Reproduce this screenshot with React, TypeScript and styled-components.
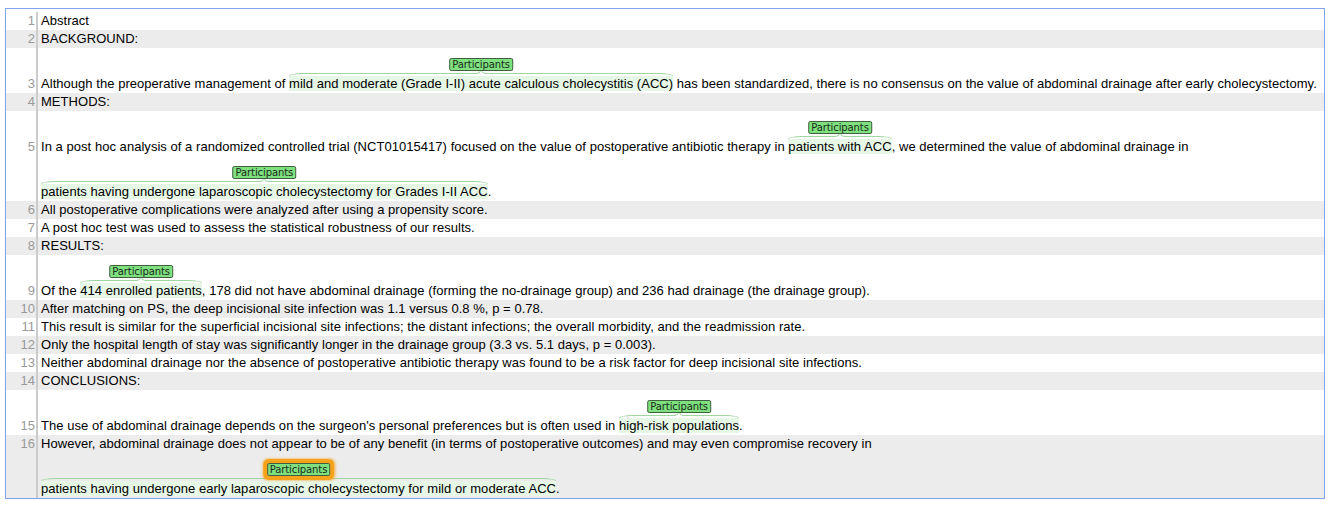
import React from "react";
import styled, { createGlobalStyle, css } from "styled-components";

const GlobalStyle = createGlobalStyle`
  *, *::before, *::after {
    box-sizing: border-box;
  }
  body {
    margin: 0;
    background: #ffffff;
    font-family: "Liberation Sans", Arial, sans-serif;
  }
`;

const Frame = styled.div`
  margin: 8px 0 0 5px;
  width: 1320px;
  border: 1px solid #7fa3ee;
  padding: 3px 0 0;
  background: #ffffff;
`;

const Row = styled.div<{ $shaded: boolean }>`
  display: flex;
  background: ${(p) => (p.$shaded ? "#ececec" : "transparent")};
`;

const Gutter = styled.div<{ $offset: boolean }>`
  flex: 0 0 32px;
  border-right: 2px solid #cccccc;
  padding: ${(p) => (p.$offset ? "27px" : "0")} 1px 0 0;
  text-align: right;
  font-size: 13px;
  line-height: 18px;
  color: #999999;
`;

const Lines = styled.div`
  flex: 1;
  padding-left: 3px;
`;

const Line = styled.div<{ $annotated: boolean }>`
  padding-top: ${(p) => (p.$annotated ? "27px" : "0")};
  font-size: 13px;
  line-height: 18px;
  letter-spacing: 0.04px;
  color: #000000;
  white-space: pre;
`;

const Span = styled.span`
  position: relative;
  background: #e6f7e6;
`;

const Brace = styled.span`
  position: absolute;
  left: 0;
  right: 0;
  bottom: 100%;
  height: 3px;
  display: flex;
`;

const BraceHalf = styled.span<{ $side: "left" | "right" }>`
  position: relative;
  flex: 1;
  border-top: 1px solid #9fd59f;
  ${(p) =>
    p.$side === "left"
      ? css`
          border-left: 1px solid #9fd59f;
          border-top-left-radius: 14px 3px;
          margin-right: 5px;
          &::after {
            right: -5px;
            border-right: 1px solid #9fd59f;
            border-bottom-right-radius: 5px 4px;
          }
        `
      : css`
          border-right: 1px solid #9fd59f;
          border-top-right-radius: 14px 3px;
          margin-left: 5px;
          &::after {
            left: -5px;
            border-left: 1px solid #9fd59f;
            border-bottom-left-radius: 5px 4px;
          }
        `}
  &::after {
    content: "";
    position: absolute;
    top: -5px;
    width: 5px;
    height: 5px;
    border-bottom: 1px solid #9fd59f;
  }
`;

const Label = styled.span<{ $selected: boolean }>`
  position: absolute;
  left: 50%;
  bottom: calc(100% + 5px);
  transform: translateX(-50%);
  padding: 0 2px;
  height: 13px;
  border: 1px solid #3f5f3f;
  border-radius: 2px;
  background: #7ee07e;
  font-family: "DejaVu Sans", "Liberation Sans", sans-serif;
  font-size: 10px;
  line-height: 11px;
  letter-spacing: -0.1px;
  color: #1a2a1a;
  white-space: nowrap;
  ${(p) =>
    p.$selected &&
    css`
      box-shadow: 0 0 0 4px #f7a21b, 0 0 2px 5px rgba(247, 162, 27, 0.45);
    `}
`;

type Part = string | { text: string; label: string; selected?: boolean };
type VisualLine = { annotated?: boolean; parts: Part[] };
type Sentence = { lines: VisualLine[] };

const P = "Participants";

const sentences: Sentence[] = [
  { lines: [{ parts: ["Abstract"] }] },
  { lines: [{ parts: ["BACKGROUND:"] }] },
  {
    lines: [
      {
        annotated: true,
        parts: [
          "Although the preoperative management of ",
          { text: "mild and moderate (Grade I-II) acute calculous cholecystitis (ACC)", label: P },
          " has been standardized, there is no consensus on the value of abdominal drainage after early cholecystectomy.",
        ],
      },
    ],
  },
  { lines: [{ parts: ["METHODS:"] }] },
  {
    lines: [
      {
        annotated: true,
        parts: [
          "In a post hoc analysis of a randomized controlled trial (NCT01015417) focused on the value of postoperative antibiotic therapy in ",
          { text: "patients with ACC", label: P },
          ", we determined the value of abdominal drainage in",
        ],
      },
      {
        annotated: true,
        parts: [
          { text: "patients having undergone laparoscopic cholecystectomy for Grades I-II ACC", label: P },
          ".",
        ],
      },
    ],
  },
  { lines: [{ parts: ["All postoperative complications were analyzed after using a propensity score."] }] },
  { lines: [{ parts: ["A post hoc test was used to assess the statistical robustness of our results."] }] },
  { lines: [{ parts: ["RESULTS:"] }] },
  {
    lines: [
      {
        annotated: true,
        parts: [
          "Of the ",
          { text: "414 enrolled patients", label: P },
          ", 178 did not have abdominal drainage (forming the no-drainage group) and 236 had drainage (the drainage group).",
        ],
      },
    ],
  },
  { lines: [{ parts: ["After matching on PS, the deep incisional site infection was 1.1 versus 0.8 %, p = 0.78."] }] },
  {
    lines: [
      {
        parts: [
          "This result is similar for the superficial incisional site infections; the distant infections; the overall morbidity, and the readmission rate.",
        ],
      },
    ],
  },
  {
    lines: [
      {
        parts: [
          "Only the hospital length of stay was significantly longer in the drainage group (3.3 vs. 5.1 days, p = 0.003).",
        ],
      },
    ],
  },
  {
    lines: [
      {
        parts: [
          "Neither abdominal drainage nor the absence of postoperative antibiotic therapy was found to be a risk factor for deep incisional site infections.",
        ],
      },
    ],
  },
  { lines: [{ parts: ["CONCLUSIONS:"] }] },
  {
    lines: [
      {
        annotated: true,
        parts: [
          "The use of abdominal drainage depends on the surgeon's personal preferences but is often used in ",
          { text: "high-risk populations", label: P },
          ".",
        ],
      },
    ],
  },
  {
    lines: [
      {
        parts: [
          "However, abdominal drainage does not appear to be of any benefit (in terms of postoperative outcomes) and may even compromise recovery in",
        ],
      },
      {
        annotated: true,
        parts: [
          {
            text: "patients having undergone early laparoscopic cholecystectomy for mild or moderate ACC",
            label: P,
            selected: true,
          },
          ".",
        ],
      },
    ],
  },
];

const Annotated = ({ text, label, selected }: { text: string; label: string; selected?: boolean }) => (
  <Span>
    <Brace>
      <BraceHalf $side="left" />
      <BraceHalf $side="right" />
    </Brace>
    <Label $selected={!!selected}>{label}</Label>
    {text}
  </Span>
);

export default function App() {
  return (
    <>
      <GlobalStyle />
      <Frame>
        {sentences.map((s, i) => (
          <Row key={i} $shaded={i % 2 === 1}>
            <Gutter $offset={!!s.lines[0].annotated}>{i + 1}</Gutter>
            <Lines>
              {s.lines.map((l, j) => (
                <Line key={j} $annotated={!!l.annotated}>
                  {l.parts.map((p, k) =>
                    typeof p === "string" ? (
                      <React.Fragment key={k}>{p}</React.Fragment>
                    ) : (
                      <Annotated key={k} {...p} />
                    )
                  )}
                </Line>
              ))}
            </Lines>
          </Row>
        ))}
      </Frame>
    </>
  );
}
